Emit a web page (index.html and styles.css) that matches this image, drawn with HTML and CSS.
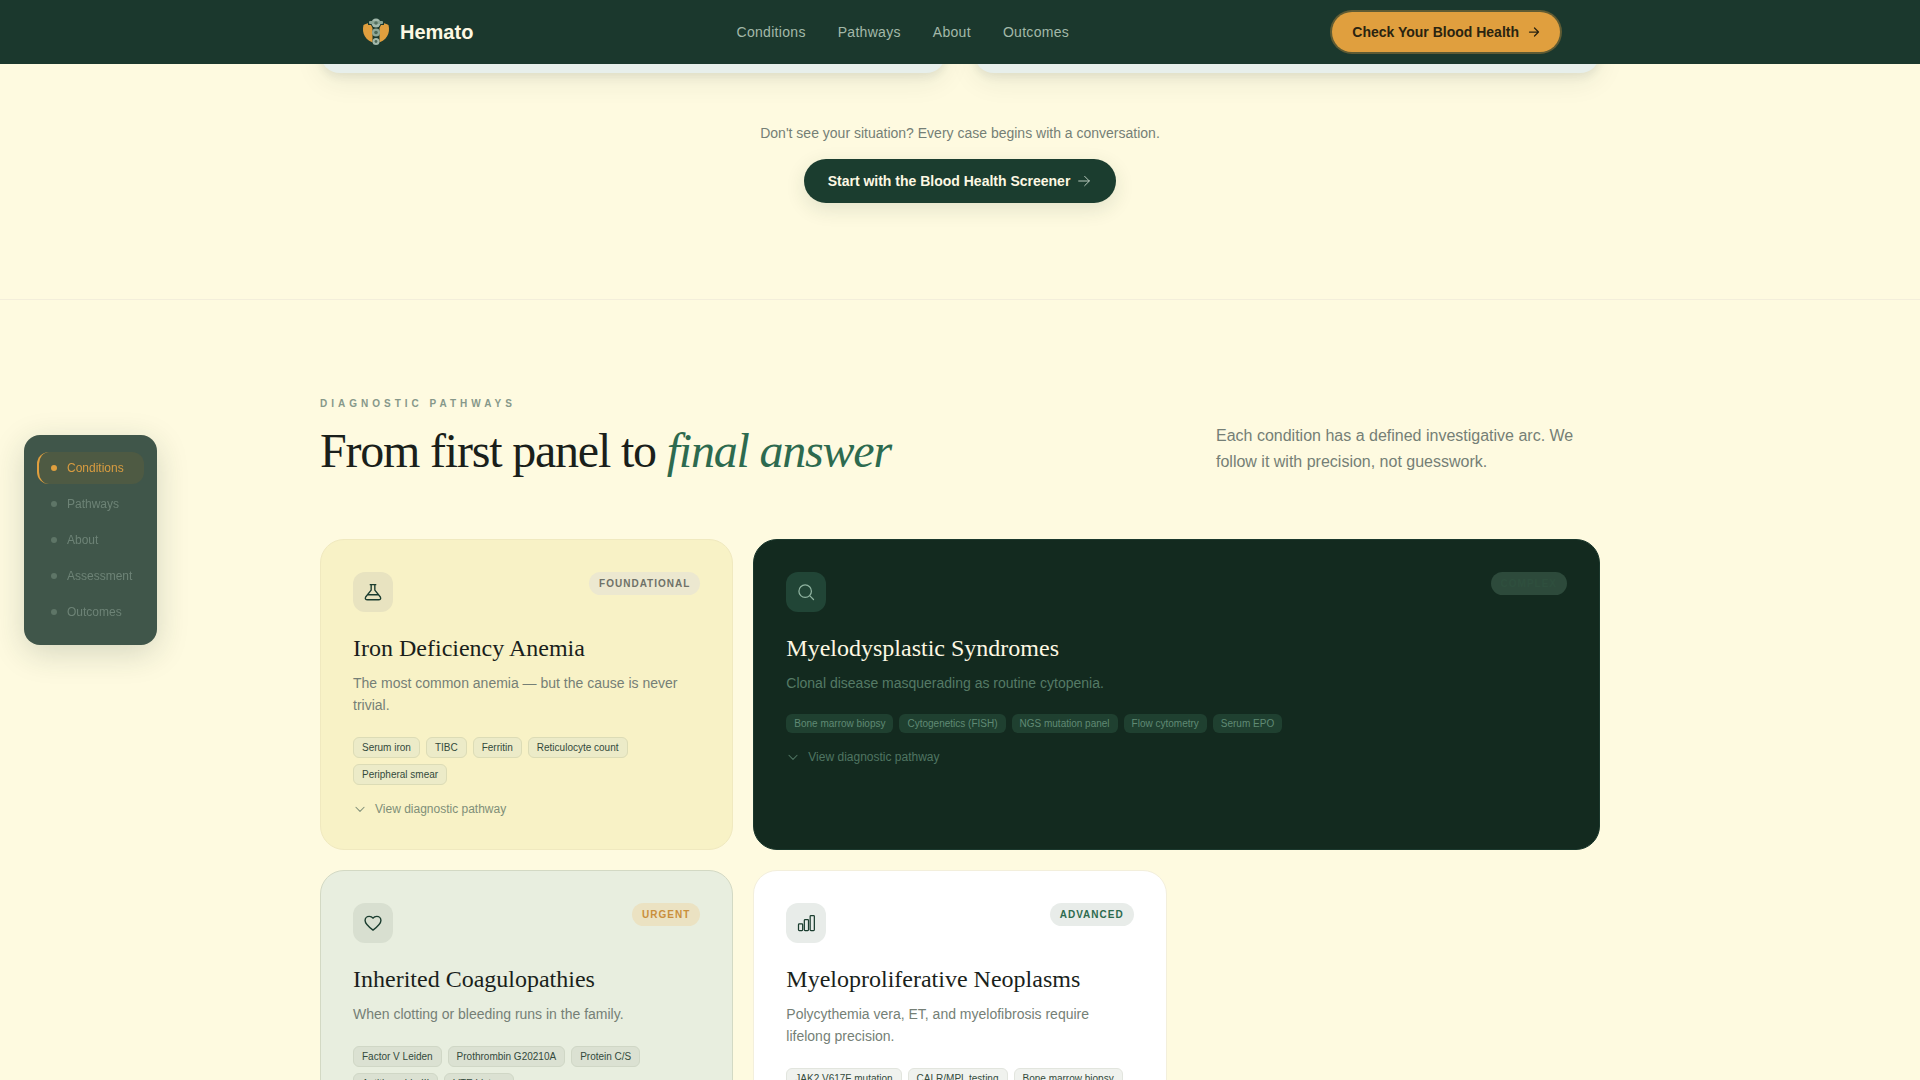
FILE: index.html
```html
<!DOCTYPE html>
<html lang="en">
<head>
    <meta charset="UTF-8">
    <meta name="viewport" content="width=device-width, initial-scale=1.0">
    <title>Hemato</title>
    <link rel="stylesheet" href="styles.css">
</head>
<body>

    <!-- Top navigation -->
    <header class="topbar">
        <div class="topbar-inner">
            <a class="brand" href="#">
                <svg class="brand-mark" viewBox="0 0 32 32" width="32" height="32">
                    <path d="M3.500 9 C7 7 10 7 13 8 L19 8 C22 7 25 7 28.500 9 C30.500 17 27 25 16 27.500 C5 25 1.500 17 3.500 9 Z" fill="#e09f3e"/>
                    <path d="M12 2 h8 l1 3 h3 v4 h-3 l-1.500 3 v15 l1 3 h-9 l1-3 v-15 l-1.500-3 h-3 v-4 h3 Z" fill="#1b382d"/>
                    <circle cx="16" cy="7" r="4.500" fill="#a3b9ab"/>
                    <rect x="9" y="5" width="14" height="3" rx="1" fill="#8aa493"/>
                    <circle cx="16" cy="7" r="1.800" fill="#55705f"/>
                    <circle cx="16" cy="16.500" r="4" fill="#8fa898"/>
                    <circle cx="16" cy="16.500" r="1.800" fill="#4d6858"/>
                    <circle cx="16" cy="25.500" r="3.500" fill="#a3b9ab"/>
                    <circle cx="16" cy="25.500" r="1.400" fill="#4d6858"/>
                </svg>
                <span>Hemato</span>
            </a>
            <nav class="topnav">
                <a href="#">Conditions</a>
                <a href="#">Pathways</a>
                <a href="#">About</a>
                <a href="#">Outcomes</a>
            </nav>
            <a class="cta" href="#">
                Check Your Blood Health
                <svg viewBox="0 0 24 24" width="12" height="12" fill="none" stroke="currentColor" stroke-width="2.500" stroke-linecap="round" stroke-linejoin="round"><path d="M3 12h18M13 4l8 8-8 8"/></svg>
            </a>
        </div>
    </header>

    <!-- Side rail -->
    <aside class="rail">
        <a class="rail-item active" href="#"><i></i>Conditions</a>
        <a class="rail-item" href="#"><i></i>Pathways</a>
        <a class="rail-item" href="#"><i></i>About</a>
        <a class="rail-item" href="#"><i></i>Assessment</a>
        <a class="rail-item" href="#"><i></i>Outcomes</a>
    </aside>

    <main>
        <!-- Conditions section, end of it -->
        <section class="screener">
            <div class="peek">
                <div class="peek-card"></div>
                <div class="peek-card"></div>
            </div>
            <p>Don't see your situation? Every case begins with a conversation.</p>
            <a class="screener-btn" href="#">
                Start with the Blood Health Screener
                <svg viewBox="0 0 24 24" width="16" height="16" fill="none" stroke="#b9cabd" stroke-width="1.500" stroke-linecap="round" stroke-linejoin="round"><path d="M4 12h16M13 5l7 7-7 7"/></svg>
            </a>
        </section>

        <!-- Diagnostic pathways -->
        <section class="pathways">
            <div class="pathways-head">
                <div>
                    <div class="eyebrow">DIAGNOSTIC PATHWAYS</div>
                    <h1>From first panel to <em>final answer</em></h1>
                </div>
                <p>Each condition has a defined investigative arc. We follow it with precision, not guesswork.</p>
            </div>

            <div class="card-grid">
                <article class="card card-sand">
                    <div class="card-top">
                        <div class="card-icon">
                            <svg viewBox="0 0 24 24" width="22" height="22" fill="none" stroke="currentColor" stroke-width="1.500" stroke-linecap="round" stroke-linejoin="round"><path d="M9 4h6M10 4v6L4 17.500C3 19.500 4 20.500 6 20.500h12c2 0 3-1 2-3L14 10V4M6.500 15h11"/></svg>
                        </div>
                        <span class="badge badge-grey">FOUNDATIONAL</span>
                    </div>
                    <h3>Iron Deficiency Anemia</h3>
                    <p>The most common anemia — but the cause is never trivial.</p>
                    <div class="tags">
                        <span>Serum iron</span><span>TIBC</span><span>Ferritin</span><span>Reticulocyte count</span><span>Peripheral smear</span>
                    </div>
                    <a class="card-link" href="#">
                        <svg viewBox="0 0 24 24" width="14" height="14" fill="none" stroke="currentColor" stroke-width="1.800" stroke-linecap="round" stroke-linejoin="round"><path d="M5 9l7 7 7-7"/></svg>
                        View diagnostic pathway
                    </a>
                </article>

                <article class="card card-dark">
                    <div class="card-top">
                        <div class="card-icon">
                            <svg viewBox="0 0 24 24" width="20" height="20" fill="none" stroke="currentColor" stroke-width="1.500" stroke-linecap="round" stroke-linejoin="round"><circle cx="11" cy="11" r="7.500"/><path d="M17 17l4 4"/></svg>
                        </div>
                        <span class="badge badge-dark">COMPLEX</span>
                    </div>
                    <h3>Myelodysplastic Syndromes</h3>
                    <p>Clonal disease masquerading as routine cytopenia.</p>
                    <div class="tags">
                        <span>Bone marrow biopsy</span><span>Cytogenetics (FISH)</span><span>NGS mutation panel</span><span>Flow cytometry</span><span>Serum EPO</span>
                    </div>
                    <a class="card-link" href="#">
                        <svg viewBox="0 0 24 24" width="14" height="14" fill="none" stroke="currentColor" stroke-width="1.800" stroke-linecap="round" stroke-linejoin="round"><path d="M5 9l7 7 7-7"/></svg>
                        View diagnostic pathway
                    </a>
                </article>

                <article class="card card-sage">
                    <div class="card-top">
                        <div class="card-icon">
                            <svg viewBox="0 0 24 24" width="20" height="20" fill="none" stroke="currentColor" stroke-width="1.700" stroke-linecap="round" stroke-linejoin="round"><path d="M12 20.500C6 16 2.500 13 2.500 9c0-3 2.300-5 5-5 1.900 0 3.500.8 4.500 2.200C13 4.800 14.600 4 16.500 4c2.700 0 5 2 5 5 0 4-3.500 7-9.500 11.500z"/></svg>
                        </div>
                        <span class="badge badge-amber">URGENT</span>
                    </div>
                    <h3>Inherited Coagulopathies</h3>
                    <p>When clotting or bleeding runs in the family.</p>
                    <div class="tags">
                        <span>Factor V Leiden</span><span>Prothrombin G20210A</span><span>Protein C/S</span><span>Antithrombin III</span><span>VTE history</span>
                    </div>
                </article>

                <article class="card card-white">
                    <div class="card-top">
                        <div class="card-icon">
                            <svg viewBox="0 0 24 24" width="20" height="20" fill="none" stroke="currentColor" stroke-width="1.500" stroke-linecap="round" stroke-linejoin="round"><rect x="3" y="13" width="5" height="8" rx="1"/><rect x="10" y="8" width="5" height="13" rx="1"/><rect x="17" y="3" width="5" height="18" rx="1"/></svg>
                        </div>
                        <span class="badge badge-green">ADVANCED</span>
                    </div>
                    <h3>Myeloproliferative Neoplasms</h3>
                    <p>Polycythemia vera, ET, and myelofibrosis require lifelong precision.</p>
                    <div class="tags">
                        <span>JAK2 V617F mutation</span><span>CALR/MPL testing</span><span>Bone marrow biopsy</span>
                    </div>
                </article>
            </div>
        </section>
    </main>

</body>
</html>
```

FILE: styles.css
```css
/* Root variables for colors */
:root {
    --forest: #1b382d;
    --forest-deep: #132a1f;
    --amber: #e09f3e;
    --cream: #fefae0;
    --ink: #1a1f1b;
    --muted: #757f76;
}

* {
    margin: 0;
    padding: 0;
    box-sizing: border-box;
}

html, body {
    height: 100vh;
    overflow: hidden;
}

body {
    background-color: var(--cream);
    color: var(--ink);
    font-family: 'Liberation Sans', Arial, sans-serif;
}

a {
    text-decoration: none;
    color: inherit;
}

/* Top navigation */
.topbar {
    position: relative;
    z-index: 10;
    height: 64px;
    background-color: var(--forest);
}

.topbar-inner {
    max-width: 1200px;
    height: 100%;
    margin: 0 auto;
    display: flex;
    align-items: center;
    justify-content: space-between;
}

.brand {
    display: flex;
    align-items: center;
    gap: 8px;
    color: #fdf8e3;
    font-size: 20px;
    font-weight: 700;
}

.topnav {
    display: flex;
    gap: 32px;
}

.topnav a {
    color: #a3b8a9;
    font-size: 14px;
    letter-spacing: 0.3px;
}

.cta {
    display: flex;
    align-items: center;
    gap: 9px;
    height: 40px;
    padding: 0 20px;
    border-radius: 20px;
    background-color: var(--amber);
    box-shadow: 0 0 0 2px rgba(224, 159, 62, 0.35);
    color: #2a2410;
    font-size: 14px;
    font-weight: 700;
}

/* Side rail */
.rail {
    position: fixed;
    left: 24px;
    top: 50%;
    transform: translateY(-50%);
    z-index: 5;
    width: 133px;
    padding: 17px 13px;
    display: flex;
    flex-direction: column;
    gap: 4px;
    border-radius: 16px;
    background-color: #40564a;
    box-shadow: 0 8px 32px rgba(27, 56, 45, 0.18);
}

.rail-item {
    display: flex;
    align-items: center;
    gap: 10px;
    height: 32px;
    padding-left: 12px;
    border-left: 2px solid transparent;
    border-radius: 12px;
    color: #6d8376;
    font-size: 12px;
    white-space: nowrap;
}

.rail-item i {
    width: 6px;
    height: 6px;
    border-radius: 50%;
    background-color: #5e7567;
}

.rail-item.active {
    border-left-color: var(--amber);
    background-color: #4e5a43;
    color: #d99c40;
}

.rail-item.active i {
    background-color: var(--amber);
}

/* End of the conditions section */
.screener {
    height: 236px;
    border-bottom: 1px solid #f3eedb;
    display: flex;
    flex-direction: column;
    align-items: center;
}

.peek {
    width: 1280px;
    height: 9px;
    display: grid;
    grid-template-columns: 1fr 1fr;
    gap: 28px;
}

/* most of the card sits under the nav bar */
.peek-card {
    height: 49px;
    margin-top: -40px;
    border-radius: 20px;
    background-color: #e7efeb;
    box-shadow: 0 4px 8px rgba(27, 56, 45, 0.08), 0 8px 28px rgba(27, 56, 45, 0.08);
}

.screener p {
    margin-top: 51px;
    font-size: 14px;
    line-height: 18px;
    color: var(--muted);
}

.screener-btn {
    margin-top: 17px;
    height: 44px;
    padding: 0 24px;
    display: flex;
    align-items: center;
    gap: 6px;
    border-radius: 22px;
    background-color: #1b3d2f;
    box-shadow: 0 6px 20px rgba(27, 56, 45, 0.12);
    color: #fdf8e3;
    font-size: 14px;
    font-weight: 700;
}

/* Diagnostic pathways */
.pathways {
    width: 1280px;
    margin: 0 auto;
    padding-top: 97px;
}

.pathways-head {
    display: flex;
    justify-content: space-between;
    align-items: flex-end;
    margin-bottom: 62px;
}

.pathways-head p {
    width: 384px;
    padding-bottom: 2px;
    font-size: 16px;
    line-height: 26px;
    color: var(--muted);
}

.eyebrow {
    font-size: 10px;
    font-weight: 700;
    letter-spacing: 4px;
    line-height: 14px;
    color: #86988a;
}

.pathways-head h1 {
    margin-top: 13px;
    font-family: 'Liberation Serif', 'Times New Roman', serif;
    font-size: 48px;
    font-weight: 400;
    letter-spacing: -1.2px;
    line-height: 53px;
}

.pathways-head em {
    color: #2d6a4f;
}

.card-grid {
    display: grid;
    grid-template-columns: repeat(3, 1fr);
    gap: 20px;
}

.card {
    padding: 32px;
    border: 1px solid transparent;
    border-radius: 24px;
}

.card-top {
    display: flex;
    justify-content: space-between;
    align-items: flex-start;
    margin-bottom: 20px;
}

.card-icon {
    width: 40px;
    height: 40px;
    display: flex;
    align-items: center;
    justify-content: center;
    border-radius: 12px;
    color: #1b3d2f;
}

.card h3 {
    font-family: 'Liberation Serif', 'Times New Roman', serif;
    font-size: 24px;
    font-weight: 400;
    line-height: 32px;
    margin-bottom: 8px;
}

.card p {
    font-size: 14px;
    line-height: 22px;
    color: var(--muted);
}

.badge {
    height: 23px;
    padding: 0 10px;
    display: flex;
    align-items: center;
    border-radius: 12px;
    font-size: 10px;
    font-weight: 700;
    letter-spacing: 1px;
}

.badge-grey { background-color: #ece8d0; color: #6f7268; }
.badge-dark { background-color: #2d4a3b; color: #2f4f3e; }
.badge-amber { background-color: #ebe2c2; color: #c98f3c; }
.badge-green { background-color: #e8ece9; color: #2d6a4f; }

.tags {
    display: flex;
    flex-wrap: wrap;
    gap: 6px;
    margin-top: 21px;
}

.tags span {
    height: 21px;
    padding: 0 8px;
    display: flex;
    align-items: center;
    border: 1px solid #dcdcb6;
    border-radius: 6px;
    background-color: #ecebc8;
    color: #334a3c;
    font-size: 10px;
}

.card-link {
    display: flex;
    align-items: center;
    gap: 8px;
    margin-top: 16px;
    font-size: 12px;
    line-height: 16px;
    color: #7f8f78;
}

.card-sand { background-color: #f8f2c6; border-color: #f0e9bf; }
.card-sand .card-icon { background-color: #e8e3c0; }

.card-dark {
    grid-column: span 2;
    background-color: var(--forest-deep);
    border-color: #1b382d;
}
.card-dark .card-icon { background-color: #214536; color: #8fb3a0; }
.card-dark h3 { color: #fdf8e3; }
.card-dark p { color: #557a66; }
.card-dark .tags { margin-top: 20px; }
.card-dark .tags span { height: 19px; border: 0; background-color: #1f4030; color: #5f8a74; }
.card-dark .card-link { color: #4f7562; }

.card-sage { background-color: #e8eedf; border-color: #d3d9c4; }
.card-sage .card-icon { background-color: #d8dfd0; }
.card-sage .tags span { background-color: #dbe1d2; border-color: #d0d7c6; }

.card-white { background-color: #fff; border-color: #f3efdc; }
.card-white .card-icon { background-color: #e8ece9; }
.card-white .tags span { background-color: #f0f2ee; border-color: #e2e5de; }
```
